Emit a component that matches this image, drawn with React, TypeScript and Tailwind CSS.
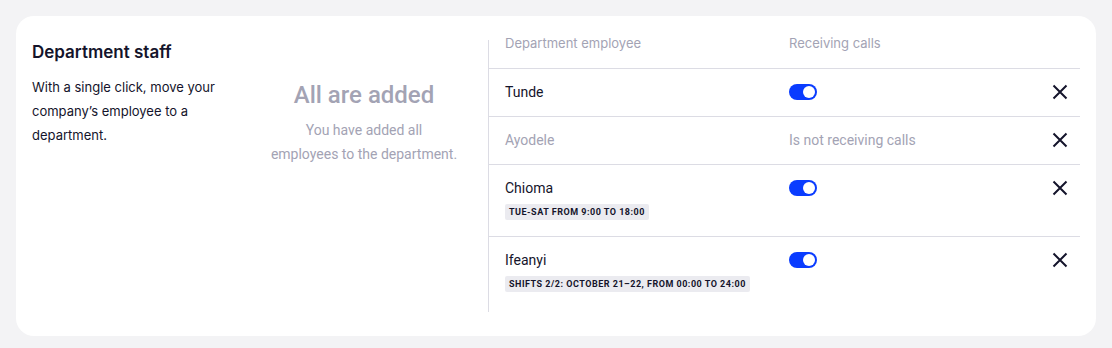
import React from "react";

const Toggle = () => (
  <div className="w-[28px] h-[16px] rounded-full bg-[#0a3cff] flex items-center justify-end pr-[2px] mt-[4px]">
    <div className="w-[12px] h-[12px] rounded-full bg-white" />
  </div>
);

const XIcon = () => (
  <svg width="16" height="16" viewBox="0 0 16 16" fill="none" className="mt-[4px]">
    <path d="M1.5 1.5L14.5 14.5M14.5 1.5L1.5 14.5" stroke="#14142b" strokeWidth="2" strokeLinecap="butt" />
  </svg>
);

type Row = { name: string; active: boolean; badge?: string };

const rows: Row[] = [
  { name: "Tunde", active: true },
  { name: "Ayodele", active: false },
  { name: "Chioma", active: true, badge: "Tue-Sat from 9:00 to 18:00" },
  { name: "Ifeanyi", active: true, badge: "Shifts 2/2: October 21–22, from 00:00 to 24:00" },
];

export default function App() {
  return (
    <div className="w-[1112px] h-[348px] bg-[#f3f3f5] p-4">
      <div className="bg-white rounded-[18px] h-[320px] flex px-4 pt-6 pb-6">
        <div className="w-[208px] shrink-0" style={{ fontFamily: "Inter, sans-serif" }}>
          <div className="text-[17px] leading-6 font-semibold text-[#14142b]">Department staff</div>
          <p className="mt-[11px] text-[13px] leading-6 text-[#14142b]">
            With a single click, move your company’s employee to a department.
          </p>
        </div>
        <div className="w-[248px] shrink-0 flex flex-col items-center pt-[39px] text-[#a3a3b4]" style={{ fontFamily: "Roboto, sans-serif" }}>
          <div className="text-[24px] leading-8 font-medium">All are added</div>
          <p className="mt-[7px] text-[14px] leading-6 text-center">
            You have added all
            <br />
            employees to the department.
          </p>
        </div>
        <div className="flex-1 border-l border-[#dcdce4] flex flex-col" style={{ fontFamily: "Roboto, sans-serif" }}>
          <div className="shrink-0 -mt-[7px] h-[36px] border-b border-[#dcdce4] flex pl-4 text-[13px] leading-5 text-[#a3a3b4]" style={{ fontFamily: "Inter, sans-serif" }}>
            <div className="w-[284px]">Department employee</div>
            <div>Receiving calls</div>
          </div>
          {rows.map((r, i) => (
            <div
              key={r.name}
              className={`shrink-0 flex pl-4 pr-3 pt-[11px] ${r.badge ? "pb-4" : "pb-3"} ${i < rows.length - 1 ? "border-b border-[#dcdce4]" : ""}`}
            >
              <div className="w-[284px] shrink-0 flex flex-col items-start">
                <div className={`text-[14px] leading-6 ${r.active ? "text-[#14142b]" : "text-[#a3a3b4]"}`}>{r.name}</div>
                {r.badge && (
                  <div className="mt-1 flex h-[16px] items-center px-[4px] rounded-[2px] bg-[#ebebf0] text-[9px] leading-[16px] font-bold uppercase tracking-[0.5px] text-[#14142b] whitespace-nowrap">
                    {r.badge}
                  </div>
                )}
              </div>
              <div className="flex-1">
                {r.active ? (
                  <Toggle />
                ) : (
                  <div className="text-[14px] leading-6 text-[#a3a3b4]">Is not receiving calls</div>
                )}
              </div>
              <div className="w-[16px]">
                <XIcon />
              </div>
            </div>
          ))}
        </div>
      </div>
    </div>
  );
}
